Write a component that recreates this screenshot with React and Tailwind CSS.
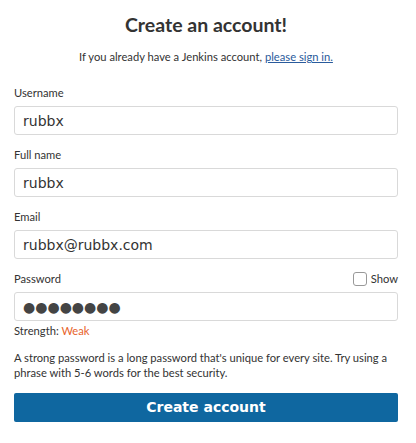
import React from 'react';

const Field = ({ label, value }) => (
    <div className="mb-[12px]">
        <div className="flex items-center justify-between h-[16px] mb-[5px]">
            <label className="text-[11.2px] leading-[16px] text-[#333]">{label}</label>
        </div>
        <input
            readOnly
            value={value}
            className="block w-full h-[29px] px-[8px] border border-[#d9d9d9] rounded-[3px] bg-white text-[14px] text-[#333] outline-none font-['DejaVu_Sans',sans-serif]"
        />
    </div>
);

export default function App() {
    return (
        <div className="w-[416px] h-[443px] bg-white pl-[14px] pr-[18px] pt-[11px] font-['Lato',sans-serif] text-[#333]">
            <h1 className="text-center text-[19.5px] leading-[28px] font-bold text-[#333]">Create an account!</h1>
            <p className="mt-[10px] text-center text-[11.2px] leading-[16px]">
                If you already have a Jenkins account,{' '}
                <a href="#" className="text-[#2a5b9c] underline">please sign in.</a>
            </p>

            <div className="mt-[20px]">
                <Field label="Username" value="rubbx" />
                <Field label="Full name" value="rubbx" />
                <Field label="Email" value="rubbx@rubbx.com" />
                <div>
                    <div className="flex items-center justify-between h-[16px] mb-[5px]">
                        <label className="text-[11.2px] leading-[16px]">Password</label>
                        <label className="flex items-center gap-[4px] text-[11.2px] leading-[16px]">
                            <span className="w-[14px] h-[14px] border border-[#999] rounded-[3px] bg-white" />
                            Show
                        </label>
                    </div>
                    <input
                        readOnly
                        value="●●●●●●●●"
                        className="block w-full h-[29px] px-[8px] border border-[#d9d9d9] rounded-[3px] bg-white text-[14px] text-[#444] outline-none font-['DejaVu_Sans',sans-serif]"
                    />
                </div>
                <div className="mt-[2px] text-[11.2px] leading-[16px]">
                    Strength: <span className="text-[#e8632b]">Weak</span>
                </div>
                <p className="mt-[11px] text-[11.2px] leading-[15px]">
                    A strong password is a long password that's unique for every site. Try using a phrase with 5-6 words for the best security.
                </p>
                <button className="mt-[13px] w-full h-[29px] rounded-[2px] bg-[#0f67a0] text-white text-[14px] font-bold font-['DejaVu_Sans',sans-serif]">
                    Create account
                </button>
            </div>
        </div>
    );
}
